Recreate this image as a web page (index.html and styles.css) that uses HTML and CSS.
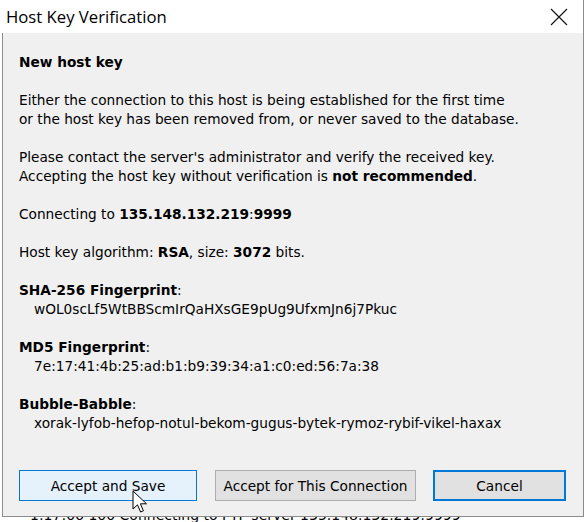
FILE: index.html
```html
<!DOCTYPE html>
<html>
<head>
<meta charset="utf-8">
<link rel="stylesheet" href="styles.css">
</head>
<body>
<div class="window">
  <div class="titlebar">
    <span class="title">Host Key Verification</span>
    <svg class="close" width="18" height="18" viewBox="0 0 18 18"><path d="M1 1 L17 17 M17 1 L1 17" stroke="#111" stroke-width="1.1" fill="none"/></svg>
  </div>
  <div class="content">
    <p class="line"><b>New host key</b></p>
    <p class="blank"></p>
    <p class="line">Either the connection to this host is being established for the first time</p>
    <p class="line">or the host key has been removed from, or never saved to the database.</p>
    <p class="blank"></p>
    <p class="line">Please contact the server's administrator and verify the received key.</p>
    <p class="line">Accepting the host key without verification is <b>not recommended</b>.</p>
    <p class="blank"></p>
    <p class="line">Connecting to <b>135.148.132.219</b>:<b>9999</b></p>
    <p class="blank"></p>
    <p class="line">Host key algorithm: <b>RSA</b>, size: <b>3072</b> bits.</p>
    <p class="blank"></p>
    <p class="line"><b>SHA-256 Fingerprint</b>:</p>
    <p class="line value">wOL0scLf5WtBBScmIrQaHXsGE9pUg9UfxmJn6j7Pkuc</p>
    <p class="blank"></p>
    <p class="line"><b>MD5 Fingerprint</b>:</p>
    <p class="line value">7e:17:41:4b:25:ad:b1:b9:39:34:a1:c0:ed:56:7a:38</p>
    <p class="blank"></p>
    <p class="line"><b>Bubble-Babble</b>:</p>
    <p class="line value">xorak-lyfob-hefop-notul-bekom-gugus-bytek-rymoz-rybif-vikel-haxax</p>
  </div>
  <div class="buttons">
    <button class="btn hover">Accept and Save</button>
    <button class="btn mid">Accept for This Connection</button>
    <button class="btn focus">Cancel</button>
    <svg class="cursor" width="17" height="25" viewBox="0 0 17 25"><path d="M1 1 L1 19 L5.5 14.8 L8.6 22 L11.4 20.8 L8.4 13.8 L14.5 13.8 Z" fill="#fff" stroke="#000" stroke-width="1" stroke-linejoin="miter"/></svg>
  </div>
</div>
<div class="behind">1:17:06 100 Connecting to FTP server 135.148.132.219:9999</div>
</body>
</html>
```
FILE: styles.css
```css
html, body {
  margin: 0;
  padding: 0;
  background: #ffffff;
  width: 586px;
  height: 522px;
  overflow: hidden;
}
.window {
  margin-left: 2px;
  width: 580px;
  border-left: 1px solid #8c8c8c;
  border-right: 1px solid #8c8c8c;
  border-bottom: 1px solid #8c8c8c;
  background: #f0f0f0;
  position: relative;
}
.titlebar {
  height: 33px;
  background: #ffffff;
  display: flex;
  align-items: center;
  justify-content: space-between;
  margin-left: -3px;
  padding-left: 6px;
  padding-right: 15px;
}
.title {
  font-family: "Open Sans", sans-serif;
  font-size: 16.7px;
  color: #000;
}
.close {
  display: block;
}
.content {
  padding: 20px 0 0 16px;
  font-family: "DejaVu Sans", sans-serif;
  font-size: 13.7px;
  color: #000;
}
.line, .blank {
  margin: 0;
  height: 19px;
  line-height: 19px;
  white-space: nowrap;
}
.value {
  padding-left: 15px;
}
.buttons {
  display: flex;
  padding: 37px 0 15px 16px;
  position: relative;
}
.btn {
  height: 31px;
  font-family: "DejaVu Sans", sans-serif;
  font-size: 13.7px;
  color: #000;
  background: #e1e1e1;
  border: 1px solid #adadad;
  padding: 0;
  margin: 0;
}
.btn.hover {
  width: 178px;
  background: #e5f1fb;
  border-color: #0078d7;
}
.btn.mid {
  width: 201px;
  margin-left: 18px;
}
.btn.focus {
  width: 133px;
  margin-left: 17px;
  border: 2px solid #0078d7;
}
.cursor {
  position: absolute;
  left: 129px;
  top: 57px;
}
.behind {
  font-family: "DejaVu Sans", sans-serif;
  font-size: 14px;
  line-height: 14px;
  margin-top: -9px;
  padding-left: 30px;
  color: #000;
}
```
